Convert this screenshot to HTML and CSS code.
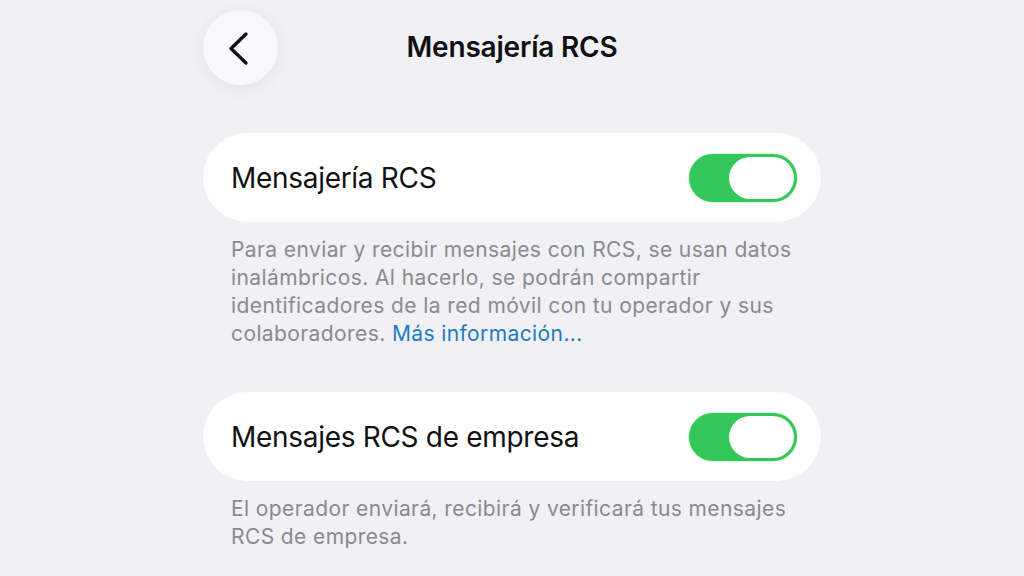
FILE: index.html
```html
<!DOCTYPE html>
<html>
  <head>
    <title>Mensajería RCS</title>
    <link rel="stylesheet" href="styles.css">
  </head>

  <body>
    <div class="screen">
      <!-- navigation bar -->
      <div class="nav">
        <button class="back" aria-label="Atrás">
          <svg width="30" height="36" viewBox="0 0 30 36">
            <path d="M22 4 L7 18.5 L22 33" fill="none" stroke="#111" stroke-width="3.4" stroke-linecap="round" stroke-linejoin="round"/>
          </svg>
        </button>
        <h1 class="title">Mensajería RCS</h1>
        <span class="spacer"></span>
      </div>

      <div class="group">
        <div class="cell">
          <span class="label">Mensajería RCS</span>
          <span class="switch on"><span class="knob"></span></span>
        </div>
        <p class="footer">Para enviar y recibir mensajes con RCS, se usan datos inalámbricos. Al hacerlo, se podrán compartir identificadores de la red móvil con tu operador y sus colaboradores. <a class="link" href="#">Más información...</a></p>
      </div>

      <div class="group">
        <div class="cell">
          <span class="label">Mensajes RCS de empresa</span>
          <span class="switch on"><span class="knob"></span></span>
        </div>
        <p class="footer">El operador enviará, recibirá y verificará tus mensajes RCS de empresa.</p>
      </div>
    </div>
  </body>
</html>
```

FILE: styles.css
```css
body {
  margin: 0;
  background: #f0f0f5;
  font-family: Inter, "Noto Sans", sans-serif;
  color: #111;
}

.screen {
  width: 618px;
  margin: 0 auto;
  padding-top: 10px;
}

/* nav bar */
.nav {
  display: grid;
  grid-template-columns: 75px 1fr 75px;
  align-items: center;
  height: 75px;
}
.back {
  width: 75px;
  height: 75px;
  border: none;
  border-radius: 50%;
  background: #f9f9fb;
  box-shadow: 0 4px 18px rgba(0, 0, 0, 0.06);
  display: flex;
  align-items: center;
  justify-content: center;
  padding: 0;
  padding-right: 4px;
}
.title {
  margin: 0;
  text-align: center;
  font-size: 28px;
  font-weight: 600;
  letter-spacing: -0.2px;
  padding-bottom: 1px;
}

/* grouped cells */
.group {
  margin-top: 48px;
}
.group + .group {
  margin-top: 44px;
}
.cell {
  background: #fff;
  height: 89px;
  border-radius: 45px;
  display: flex;
  align-items: center;
  justify-content: space-between;
  padding: 0 24px 0 28px;
}
.label {
  font-size: 28px;
  letter-spacing: -0.3px;
}
.footer {
  margin: 14px 0 0;
  padding: 0 28px;
  font-size: 21px;
  line-height: 28px;
  color: #8a8a8f;
  letter-spacing: 0.4px;
}
.link {
  color: #1f7bc0;
  text-decoration: none;
}

/* toggle switch */
.switch {
  width: 108px;
  height: 48px;
  border-radius: 24px;
  background: #e5e5ea;
  display: flex;
  align-items: center;
  padding: 0 3px;
  box-sizing: border-box;
}
.switch.on {
  background: #34c759;
  justify-content: flex-end;
  box-shadow: 0 0 2px rgba(52, 199, 89, 0.6);
}
.knob {
  width: 65px;
  height: 42px;
  border-radius: 21px;
  background: #fff;
}
```
